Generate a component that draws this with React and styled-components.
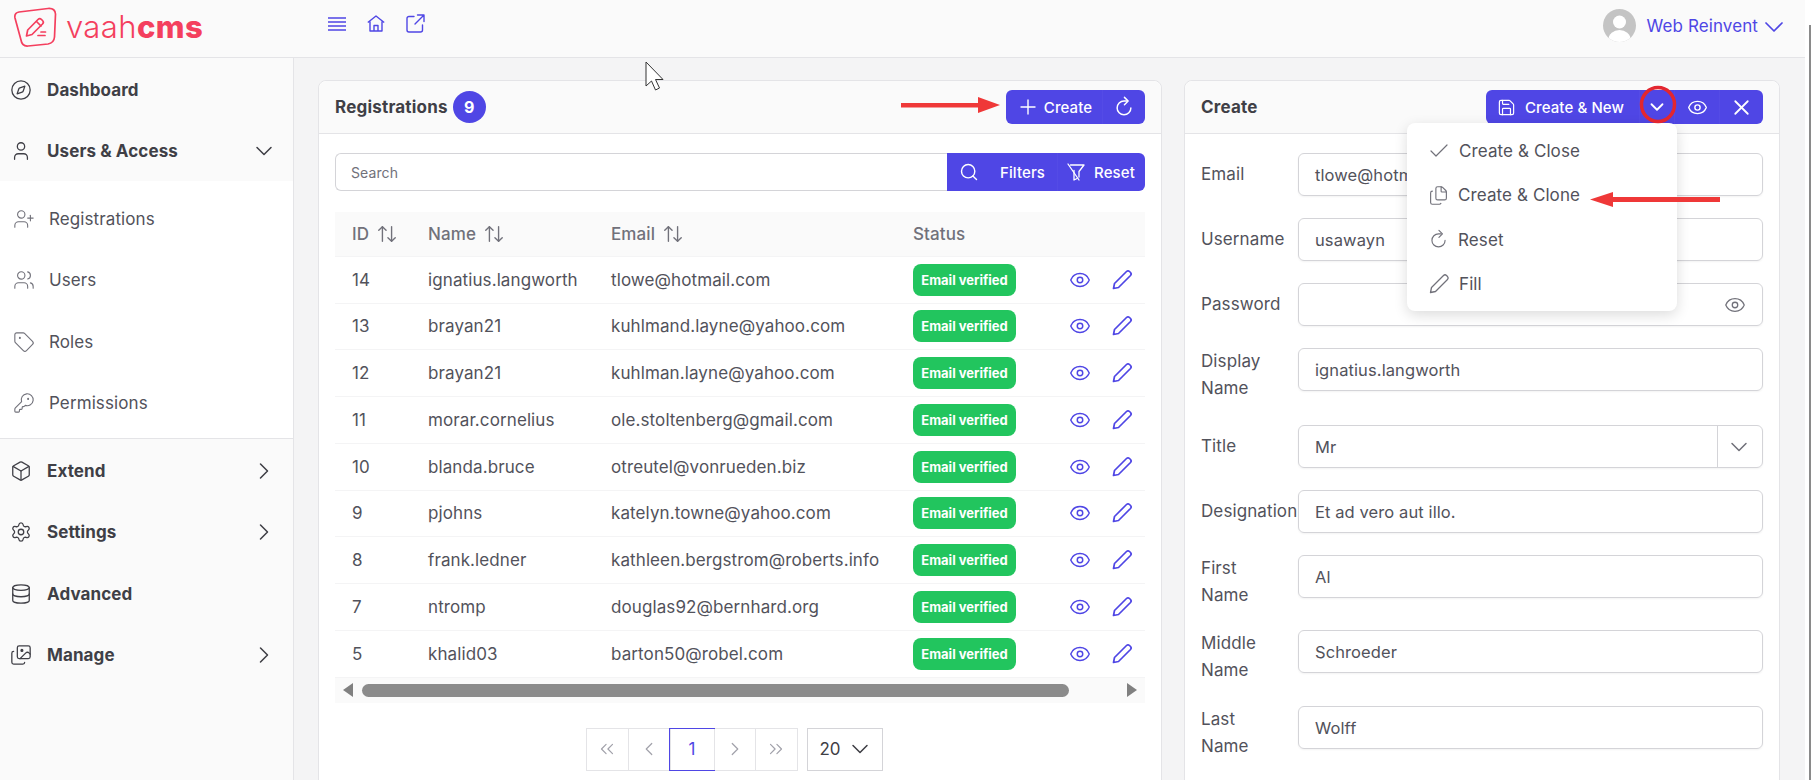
import React from 'react';
import styled, { createGlobalStyle } from 'styled-components';
import {
  Compass, User, UserPlus, Users, Tag, KeyRound, Box, Settings, Database, Images,
  ChevronDown, ChevronRight, ChevronLeft, ChevronsLeft, ChevronsRight, Plus,
  Search, Eye, ArrowUpDown, Save, X, Check, Files,
} from 'lucide-react';

const primary = '#4f46e5';
const text = '#3f3f46';
const muted = '#71717a';
const line = '#e4e4e7';

const GlobalStyle = createGlobalStyle`
  html, body {
    margin: 0;
    height: 780px;
    overflow: hidden;
    background: #fff;
  }
  body, input, button {
    font-family: Inter, "Liberation Sans", sans-serif;
    color: ${text};
  }
  * {
    box-sizing: border-box;
  }
`;

const Page = styled.div`
  width: 1805px;
  height: 780px;
  display: flex;
  flex-direction: column;
  background: #f4f4f5;
  overflow: visible;
  position: relative;
`;

const EdgeLine = styled.div`
  position: absolute;
  left: 1809px;
  top: 25px;
  bottom: 0;
  width: 2px;
  background: #8a8a8a;
`;

const Topbar = styled.header`
  height: 58px;
  flex: none;
  display: flex;
  align-items: center;
  background: #fafafa;
  border-bottom: 1px solid ${line};
  padding: 0 15px 0 13px;
`;

const Logo = styled.div`
  width: 315px;
  display: flex;
  align-items: center;
  gap: 9px;
  color: #f43f5e;
  font-size: 31px;
  letter-spacing: 0.4px;
  line-height: 40px;
  margin-top: -4px;
  b {
    font-weight: 800;
  }
  span {
    font-weight: 300;
  }
`;

const TopIcons = styled.div`
  display: flex;
  align-items: center;
  gap: 21px;
  color: ${primary};
  margin-top: -10px;
`;

const Profile = styled.div`
  margin-left: auto;
  display: flex;
  align-items: center;
  gap: 11px;
  color: ${primary};
  font-size: 17px;
  letter-spacing: 0.1px;
  margin-top: -6px;
`;

const Avatar = styled.div`
  width: 33px;
  height: 33px;
  border-radius: 50%;
  overflow: hidden;
`;

const ProfileCaret = styled(ChevronDown)`
  margin-left: -11px;
  margin-top: 2px;
`;

const Body = styled.div`
  flex: 1;
  display: flex;
  min-height: 0;
  overflow: hidden;
`;

const Sidebar = styled.nav`
  width: 294px;
  flex: none;
  background: #fafafa;
  border-right: 1px solid ${line};
`;

const MainItem = styled.div`
  height: 61.5px;
  display: flex;
  align-items: center;
  padding: 2px 15px 0 10px;
  font-weight: 700;
  font-size: 17px;
  letter-spacing: 0.1px;
  svg:first-child {
    margin-right: 15px;
  }
  svg:last-child:not(:first-child) {
    margin-left: auto;
  }
`;

const SubMenu = styled.div`
  background: #fff;
  border-bottom: 1px solid ${line};
  border-right: 1px solid ${line};
  height: 258px;
  margin-right: -1px;
  padding-top: 7px;
`;

const SubItem = styled.div`
  height: 61.5px;
  display: flex;
  align-items: center;
  gap: 14px;
  padding-left: 13px;
  font-size: 17px;
  letter-spacing: 0.1px;
  color: #52525b;
  svg {
    color: ${muted};
  }
`;

const Content = styled.main`
  flex: 1;
  display: flex;
  gap: 22px;
  padding: 22px 24px 0 24px;
  min-width: 0;
`;

const Panel = styled.section`
  width: ${p => p.$width}px;
  flex: none;
  align-self: flex-start;
  background: #fff;
  border: 1px solid ${line};
  border-radius: 8px;
`;

const PanelHead = styled.div`
  height: 53px;
  display: flex;
  align-items: center;
  padding: 0 16px;
  background: #fafafa;
  border-bottom: 1px solid ${line};
  border-radius: 8px 8px 0 0;
  font-size: 17px;
  font-weight: 700;
  letter-spacing: 0.2px;
`;

const Count = styled.span`
  width: 33px;
  height: 32px;
  border-radius: 50%;
  background: ${primary};
  color: #fff;
  font-size: 16px;
  font-weight: 700;
  display: flex;
  align-items: center;
  justify-content: center;
  margin-left: 5px;
`;

const ButtonGroup = styled.div`
  margin-left: auto;
  display: flex;
  height: 34px;
  background: ${primary};
  border-radius: 6px;
  overflow: hidden;
`;

const GroupButton = styled.button`
  width: ${p => p.$width}px;
  display: flex;
  align-items: center;
  justify-content: center;
  gap: ${p => p.$gap || 10}px;
  padding: 0 ${p => p.$endPad || 0}px 0 0;
  border: 0;
  background: transparent;
  color: #fff;
  font-size: 15px;
  font-weight: 500;
  letter-spacing: 0.1px;
  & + & {
    border-left: 1px solid #544be6;
  }
`;

const PanelBody = styled.div`
  padding: 19px 16px 40px;
`;

const SearchRow = styled.div`
  display: flex;
  height: 38px;
`;

const SearchInput = styled.div`
  flex: 1;
  display: flex;
  align-items: center;
  border: 1px solid #d4d4d8;
  border-right: 0;
  border-radius: 6px 0 0 6px;
  padding-left: 15px;
  font-size: 14px;
  letter-spacing: 0.1px;
  color: ${muted};
`;

const SearchButtons = styled.div`
  display: flex;
  background: ${primary};
  border-radius: 0 6px 6px 0;
  overflow: hidden;
`;

const Table = styled.table`
  width: 810px;
  margin-top: 21px;
  border-collapse: collapse;
  table-layout: fixed;
  font-size: 17px;
  letter-spacing: 0.1px;
  th {
    height: 44px;
    background: #fafafa;
    text-align: left;
    font-weight: 500;
    color: ${muted};
    padding: 0 0 0 17px;
    border-bottom: 1px solid #f4f4f5;
  }
  td {
    height: 46.5px;
    padding: 0 0 0 17px;
    color: #52525b;
    border-bottom: 1px solid #f4f4f5;
    white-space: nowrap;
  }
  tbody tr:nth-child(odd) td {
    height: 47px;
  }
`;

const HeadCell = styled.span`
  display: inline-flex;
  align-items: center;
  gap: 7px;
`;

const Badge = styled.span`
  display: inline-flex;
  align-items: center;
  justify-content: center;
  width: 103px;
  height: 32px;
  border-radius: 8px;
  background: #22c55e;
  color: #fff;
  font-size: 13px;
  letter-spacing: 0;
  font-weight: 700;
`;

const RowActions = styled.div`
  display: flex;
  align-items: center;
  justify-content: flex-end;
  gap: 19px;
  padding-right: 11px;
  color: ${primary};
`;

const Scrollbar = styled.div`
  height: 25px;
  display: flex;
  align-items: center;
  background: #fafafa;
  padding: 0 8px;
`;

const ScrollThumb = styled.div`
  width: 707px;
  height: 13px;
  border-radius: 7px;
  background: #8b8b8b;
  margin-left: 9px;
`;

const ScrollArrow = styled.span`
  width: 0;
  height: 0;
  border-top: 7px solid transparent;
  border-bottom: 7px solid transparent;
  ${p => (p.$right ? `border-left: 10px solid #808080; margin-left: auto;` : `border-right: 10px solid #808080;`)}
`;

const PagerRow = styled.div`
  display: flex;
  justify-content: center;
  gap: 9px;
  margin-top: 25px;
  padding-right: 12px;
`;

const Pager = styled.div`
  display: flex;
  height: 43px;
  border: 1px solid ${line};
`;

const PageCell = styled.div`
  width: ${p => (p.$active ? 44 : 41.5)}px;
  display: flex;
  align-items: center;
  justify-content: center;
  color: ${p => (p.$active ? primary : '#a1a1aa')};
  outline: ${p => (p.$active ? `1px solid ${primary}` : 'none')};
  font-size: 17px;
  border-left: 1px solid ${line};
  &:first-child {
    border-left: 0;
  }
`;

const PageSize = styled.div`
  width: 76px;
  height: 43px;
  display: flex;
  align-items: center;
  gap: 5px;
  padding-left: 12px;
  border: 1px solid #d4d4d8;
  font-size: 17px;
`;

const FormBody = styled.div`
  padding: 19px 16px 40px;
  display: flex;
  flex-direction: column;
`;

const FormRow = styled.div`
  display: flex;
  align-items: ${p => (p.$twoLine ? 'flex-start' : 'center')};
  margin-bottom: ${p => p.$gap}px;
`;

const FormLabel = styled.label`
  width: 97px;
  flex: none;
  padding-right: 17px;
  font-size: 17px;
  letter-spacing: 0.1px;
  line-height: 27px;
  color: #52525b;
`;

const Field = styled.div`
  width: 466px;
  height: 43px;
  display: flex;
  align-items: center;
  padding: 0 16px;
  border: 1px solid #d4d4d8;
  border-radius: 6px;
  font-size: 16.5px;
  letter-spacing: 0.1px;
  color: #52525b;
  box-shadow: 0 1px 2px rgba(0, 0, 0, 0.05);
  position: relative;
`;

const FieldEnd = styled.div`
  margin-left: auto;
  margin-right: ${p => p.$right || 0}px;
  display: flex;
  color: ${muted};
`;

const Divider = styled.span`
  position: absolute;
  top: 0;
  bottom: 0;
  right: 44px;
  border-left: 1px solid #d4d4d8;
`;

const SplitMenu = styled.div`
  position: absolute;
  left: 1407px;
  top: 123px;
  width: 270px;
  height: 188px;
  padding: 6px 0;
  background: #fff;
  border-radius: 8px;
  box-shadow: 0 4px 14px rgba(0, 0, 0, 0.14);
  z-index: 2;
`;

const MenuItem = styled.div`
  height: 44.3px;
  display: flex;
  align-items: center;
  padding-left: 20px;
  font-size: 17px;
  letter-spacing: 0.1px;
  color: #52525b;
  svg {
    color: ${muted};
  }
`;

const MenuIcon = styled.span`
  width: ${p => (p.$small ? 31 : 32)}px;
  flex: none;
  display: flex;
  align-items: center;
  padding-left: ${p => (p.$small ? 1 : 0)}px;
`;

const Overlay = styled.svg`
  position: absolute;
  left: 0;
  top: 0;
  z-index: 3;
  pointer-events: none;
`;

const rows = [
  [14, 'ignatius.langworth', 'tlowe@hotmail.com'],
  [13, 'brayan21', 'kuhlmand.layne@yahoo.com'],
  [12, 'brayan21', 'kuhlman.layne@yahoo.com'],
  [11, 'morar.cornelius', 'ole.stoltenberg@gmail.com'],
  [10, 'blanda.bruce', 'otreutel@vonrueden.biz'],
  [9, 'pjohns', 'katelyn.towne@yahoo.com'],
  [8, 'frank.ledner', 'kathleen.bergstrom@roberts.info'],
  [7, 'ntromp', 'douglas92@bernhard.org'],
  [5, 'khalid03', 'barton50@robel.com'],
];

const fields = [
  ['Email', 'tlowe@hotmail.com', 22],
  ['Username', 'usawayn', 22],
  ['Password', '', 22, 'eye'],
  ['Display Name', 'ignatius.langworth', 23, null, true],
  ['Title', 'Mr', 22, 'select'],
  ['Designation', 'Et ad vero aut illo.', 22],
  ['First Name', 'Al', 21, null, true],
  ['Middle Name', 'Schroeder', 22, null, true],
  ['Last Name', 'Wolff', 22, null, true],
];

const LogoMark = () => (
  <svg width="44" height="40" viewBox="0 0 44 40" fill="none" stroke="#f43f5e" strokeWidth="1.7" strokeLinecap="round" strokeLinejoin="round">
    <path d="M6 5 L35 1.500 Q42 1 42.500 7 L41.500 30 Q41 36 35 37 L15 39 Q9 39.500 8 33 L2 11 Q1 6 6 5Z" />
    <path d="M13.500 29l1.200-6L25 12.500c1-1 2.500-1 3.500 0l1 1c1 1 1 2.500 0 3.500L19 27.500 13.500 29Z" />
    <path d="M23.500 14.500l4.500 4.500M25 28.500h7M28 25h4.500" />
  </svg>
);

const AvatarPic = () => (
  <svg width="33" height="33" viewBox="0 0 33 33">
    <rect width="33" height="33" fill="#c4c4c4" />
    <circle cx="16.500" cy="13" r="6.500" fill="#fff" />
    <ellipse cx="16.500" cy="30" rx="11" ry="9" fill="#fff" />
  </svg>
);

const BarsIcon = () => (
  <svg width="18" height="14" viewBox="0 0 18 14" stroke="currentColor" strokeWidth="1.300">
    <path d="M0 1h18M0 5h18M0 9h18M0 13h18" />
  </svg>
);

const HomeIcon = () => (
  <svg width="18" height="17" viewBox="0 0 18 17" fill="none" stroke="currentColor" strokeWidth="1.400" strokeLinejoin="round">
    <path d="M.8 7.500 9 1l8.200 6.500M3 6.500V16h12V6.500M7 16v-5.500h4V16" />
  </svg>
);

const OpenIcon = () => (
  <svg width="19" height="19" viewBox="0 0 19 19" fill="none" stroke="currentColor" strokeWidth="1.400" strokeLinecap="round" strokeLinejoin="round">
    <path d="M8 2.500H3a2 2 0 0 0-2 2V16a2 2 0 0 0 2 2h11.500a2 2 0 0 0 2-2v-5" />
    <path d="M11.500 1H18v6.500M18 1 9 10" />
  </svg>
);

const PencilIcon = ({ size = 24, width = 1.7 }) => (
  <svg width={size} height={size} viewBox="0 0 24 24" fill="none" stroke="currentColor" strokeWidth={width} strokeLinejoin="round">
    <path d="M3.500 20.500 4.500 15.500 16.500 3.500a2.200 2.200 0 0 1 3 0l1 1a2.200 2.200 0 0 1 0 3L8.500 19.500Z" />
  </svg>
);

const RefreshIcon = ({ size = 24, width = 1.5 }) => (
  <svg width={size} height={size} viewBox="0 0 24 24" fill="none" stroke="currentColor" strokeWidth={width} strokeLinecap="round" strokeLinejoin="round">
    <path d="M19.500 13a7.500 7.500 0 1 1-7.500-7.500h3" />
    <path d="M12.500 1.500 16.500 5.500l-4 4" />
  </svg>
);

const FilterSlash = () => (
  <svg width="20" height="20" viewBox="0 0 20 20" fill="none" stroke="#fff" strokeWidth="1.300" strokeLinejoin="round" strokeLinecap="round">
    <path d="M4.500 3H18l-5 6.500V15M8 8.500V18l3-1.500" />
    <path d="M2 2l11 16" />
  </svg>
);

const App = () => (
  <Page>
    <GlobalStyle />
    <Topbar>
      <Logo>
        <LogoMark />
        <div><span>vaah</span><b>cms</b></div>
      </Logo>
      <TopIcons>
        <BarsIcon />
        <HomeIcon />
        <OpenIcon />
      </TopIcons>
      <Profile>
        <Avatar><AvatarPic /></Avatar>
        <span>Web Reinvent</span>
        <ProfileCaret size={32} strokeWidth={1.3} />
      </Profile>
    </Topbar>
    <Body>
      <Sidebar>
        <MainItem><Compass size={22} strokeWidth={1.4} />Dashboard</MainItem>
        <MainItem><User size={22} strokeWidth={1.4} />Users &amp; Access<ChevronDown size={28} strokeWidth={1.3} /></MainItem>
        <SubMenu>
          <SubItem><UserPlus size={22} strokeWidth={1.2} />Registrations</SubItem>
          <SubItem><Users size={22} strokeWidth={1.2} />Users</SubItem>
          <SubItem><Tag size={22} strokeWidth={1.2} />Roles</SubItem>
          <SubItem><KeyRound size={22} strokeWidth={1.2} />Permissions</SubItem>
        </SubMenu>
        <MainItem><Box size={22} strokeWidth={1.4} />Extend<ChevronRight size={28} strokeWidth={1.3} /></MainItem>
        <MainItem><Settings size={22} strokeWidth={1.4} />Settings<ChevronRight size={28} strokeWidth={1.3} /></MainItem>
        <MainItem><Database size={22} strokeWidth={1.4} />Advanced</MainItem>
        <MainItem><Images size={22} strokeWidth={1.4} />Manage<ChevronRight size={28} strokeWidth={1.3} /></MainItem>
      </Sidebar>
      <Content>
        <Panel $width={844}>
          <PanelHead>
            Registrations<Count>9</Count>
            <ButtonGroup>
              <GroupButton $width={96} $gap={4}><Plus size={24} strokeWidth={1.4} />Create</GroupButton>
              <GroupButton $width={43}><RefreshIcon size={22} width={1.6} /></GroupButton>
            </ButtonGroup>
          </PanelHead>
          <PanelBody>
            <SearchRow>
              <SearchInput>Search</SearchInput>
              <SearchButtons>
                <GroupButton $width={110} $gap={21}><Search size={20} strokeWidth={1.7} />Filters</GroupButton>
                <GroupButton $width={88} $gap={8} $endPad={2}><FilterSlash />Reset</GroupButton>
              </SearchButtons>
            </SearchRow>
            <Table>
              <colgroup>
                <col style={{ width: 76 }} />
                <col style={{ width: 183 }} />
                <col style={{ width: 302 }} />
                <col style={{ width: 140 }} />
                <col />
              </colgroup>
              <thead>
                <tr>
                  <th><HeadCell>ID<ArrowUpDown size={22} strokeWidth={1.5} /></HeadCell></th>
                  <th><HeadCell>Name<ArrowUpDown size={22} strokeWidth={1.5} /></HeadCell></th>
                  <th><HeadCell>Email<ArrowUpDown size={22} strokeWidth={1.5} /></HeadCell></th>
                  <th>Status</th>
                  <th />
                </tr>
              </thead>
              <tbody>
                {rows.map(([id, name, email]) => (
                  <tr key={id}>
                    <td>{id}</td>
                    <td>{name}</td>
                    <td>{email}</td>
                    <td><Badge>Email verified</Badge></td>
                    <td>
                      <RowActions>
                        <Eye size={22} strokeWidth={1.6} />
                        <PencilIcon />
                      </RowActions>
                    </td>
                  </tr>
                ))}
              </tbody>
            </Table>
            <Scrollbar>
              <ScrollArrow />
              <ScrollThumb />
              <ScrollArrow $right />
            </Scrollbar>
            <PagerRow>
              <Pager>
                <PageCell><ChevronsLeft size={22} strokeWidth={1.3} /></PageCell>
                <PageCell><ChevronLeft size={22} strokeWidth={1.3} /></PageCell>
                <PageCell $active>1</PageCell>
                <PageCell><ChevronRight size={22} strokeWidth={1.3} /></PageCell>
                <PageCell><ChevronsRight size={22} strokeWidth={1.3} /></PageCell>
              </Pager>
              <PageSize>20<ChevronDown size={28} strokeWidth={1.3} /></PageSize>
            </PagerRow>
          </PanelBody>
        </Panel>
        <Panel $width={596}>
          <PanelHead>
            Create
            <ButtonGroup>
              <GroupButton $width={153} $gap={9} $endPad={4}><Save size={19} strokeWidth={1.5} />Create &amp; New</GroupButton>
              <GroupButton $width={35}><ChevronDown size={22} strokeWidth={2} /></GroupButton>
              <GroupButton $width={45}><Eye size={21} strokeWidth={1.6} /></GroupButton>
              <GroupButton $width={44}><X size={25} strokeWidth={1.7} /></GroupButton>
            </ButtonGroup>
          </PanelHead>
          <FormBody>
            {fields.map(([label, value, gap, extra, twoLine]) => (
              <FormRow key={label} $gap={gap} $twoLine={twoLine}>
                <FormLabel>{label}</FormLabel>
                <Field>
                  {value}
                  {extra === 'eye' && <FieldEnd><Eye size={22} strokeWidth={1.4} /></FieldEnd>}
                  {extra === 'select' && (
                    <>
                      <Divider />
                      <FieldEnd $right={-7}><ChevronDown size={28} strokeWidth={1.3} /></FieldEnd>
                    </>
                  )}
                </Field>
              </FormRow>
            ))}
          </FormBody>
        </Panel>
      </Content>
    </Body>
    <SplitMenu>
      <MenuItem><MenuIcon><Check size={24} strokeWidth={1.2} /></MenuIcon>Create &amp; Close</MenuItem>
      <MenuItem><MenuIcon $small><Files size={21} strokeWidth={1.3} /></MenuIcon>Create &amp; Clone</MenuItem>
      <MenuItem><MenuIcon $small><RefreshIcon size={21} width={1.3} /></MenuIcon>Reset</MenuItem>
      <MenuItem><MenuIcon><PencilIcon width={1.3} /></MenuIcon>Fill</MenuItem>
    </SplitMenu>
    <EdgeLine />
    <Overlay width="1811" height="780" viewBox="0 0 1811 780">
      <path d="M901 103h80v4.500h-80z" fill="#ef3838" />
      <path d="M1000 105l-22-8v16z" fill="#ef3838" />
      <path d="M1720 197h-110v5h110z" fill="#ef3838" />
      <path d="M1590 199.500l23-7.500v15z" fill="#ef3838" />
      <ellipse cx="1658" cy="104.500" rx="16.500" ry="17" fill="none" stroke="#e3262f" strokeWidth="3.500" />
      <path d="M646 62v24l5.500-5 4 9 4-2-4-8.500h7.500L646 62Z" fill="#fff" stroke="#333" strokeWidth="1" strokeLinejoin="round" />
    </Overlay>
  </Page>
);

export default App;
